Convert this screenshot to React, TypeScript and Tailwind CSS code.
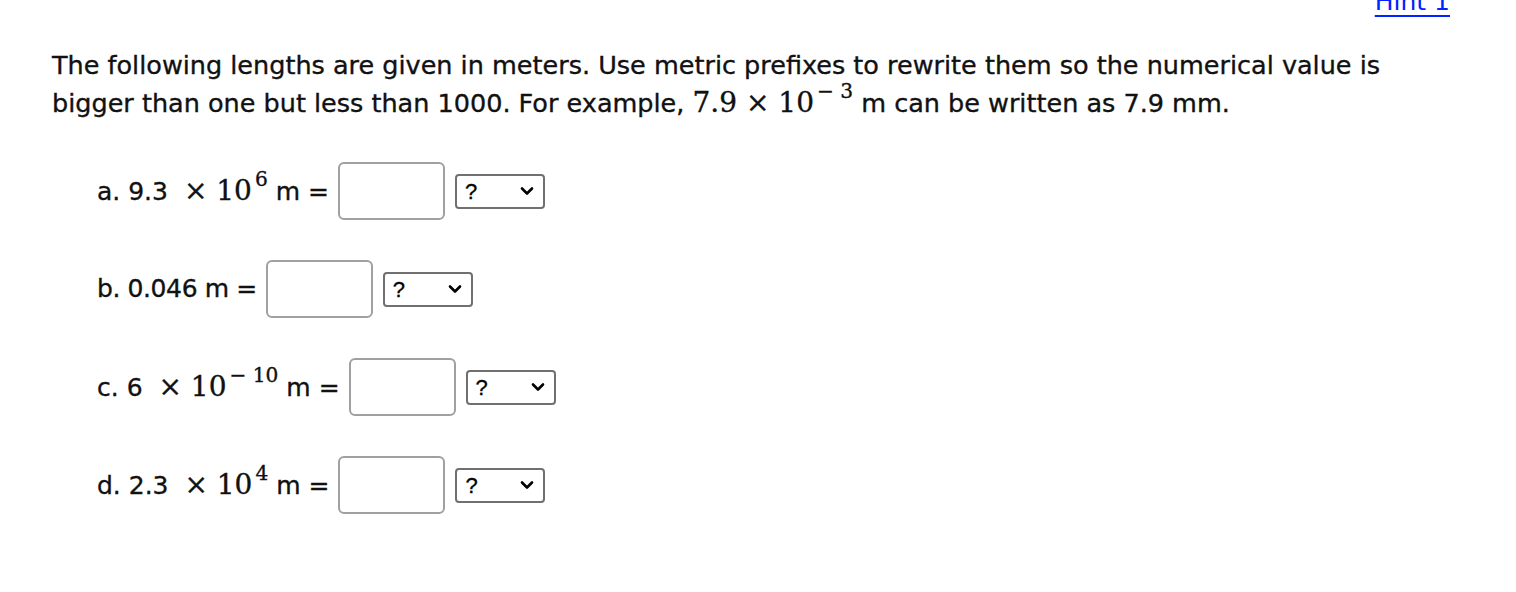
import React from "react";

const sans = { fontFamily: '"DejaVu Sans", Verdana, sans-serif' };

function Sup({ children }: { children: React.ReactNode }) {
  return <sup className="relative top-[-0.2em] ml-[3px] text-[0.72em] align-super leading-none">{children}</sup>;
}

function Chevron() {
  return (
    <svg width="14" height="10" viewBox="0 0 14 10">
      <path d="M2 2.5 L7 7.5 L12 2.5" fill="none" stroke="#000" strokeWidth="2.6" strokeLinecap="round" strokeLinejoin="round" />
    </svg>
  );
}

function Answer() {
  return (
    <div className="flex items-center">
      <div className="ml-[9px] w-[107px] h-[58px] rounded-[6px] border-2 border-[#a0a0a0] bg-white" />
      <div className="ml-[10px] w-[90px] h-[35px] rounded-[4px] border-2 border-[#707070] bg-white flex items-center justify-between pl-[8px] pr-[9px]">
        <span className="text-[22px] text-black" style={{ fontFamily: '"Liberation Sans", Arial, sans-serif' }}>?</span>
        <Chevron />
      </div>
    </div>
  );
}

function M({ children }: { children: React.ReactNode }) {
  return <span className="text-[28px]" style={{ fontFamily: '"DejaVu Serif", "Liberation Serif", serif' }}>{children}</span>;
}

export default function App() {
  return (
    <div className="w-[1516px] h-[592px] bg-white text-[#111] overflow-hidden [-webkit-text-stroke:0.35px_#111]" style={sans}>
      <div className="flex justify-end pr-[66px] h-[14px]">
        <a className="text-[25px] leading-[30px] mt-[-13px] text-[#0022ff] underline underline-offset-[5px] decoration-[2px] [-webkit-text-stroke:0] self-start" href="#">Hint 1</a>
      </div>
      <p className="ml-[52px] mt-[32px] text-[25.5px] leading-[38px]">
        The following lengths are given in meters. Use metric prefixes to rewrite them so the numerical value is
        <br />
        bigger than one but less than 1000. For example,{" "}
        <M>
          7.9 × 10<Sup>− 3</Sup>
        </M>{" "}
        m can be written as 7.9 mm.
      </p>
      <div className="ml-[97px] mt-[40px] flex flex-col gap-[40px] text-[25px]">
        <div className="flex items-center h-[58px]">
          <span>a. 9.3&nbsp;&nbsp;<M>× 10<Sup>6</Sup></M>&nbsp;m =</span>
          <Answer />
        </div>
        <div className="flex items-center h-[58px]">
          <span className="tracking-[-0.4px]">b. 0.046 m =</span>
          <Answer />
        </div>
        <div className="flex items-center h-[58px]">
          <span>c. 6&nbsp;&nbsp;<M>× 10<Sup>− 10</Sup></M>&nbsp;m =</span>
          <Answer />
        </div>
        <div className="flex items-center h-[58px]">
          <span>d. 2.3&nbsp;&nbsp;<M>× 10<Sup>4</Sup></M>&nbsp;m =</span>
          <Answer />
        </div>
      </div>
    </div>
  );
}
